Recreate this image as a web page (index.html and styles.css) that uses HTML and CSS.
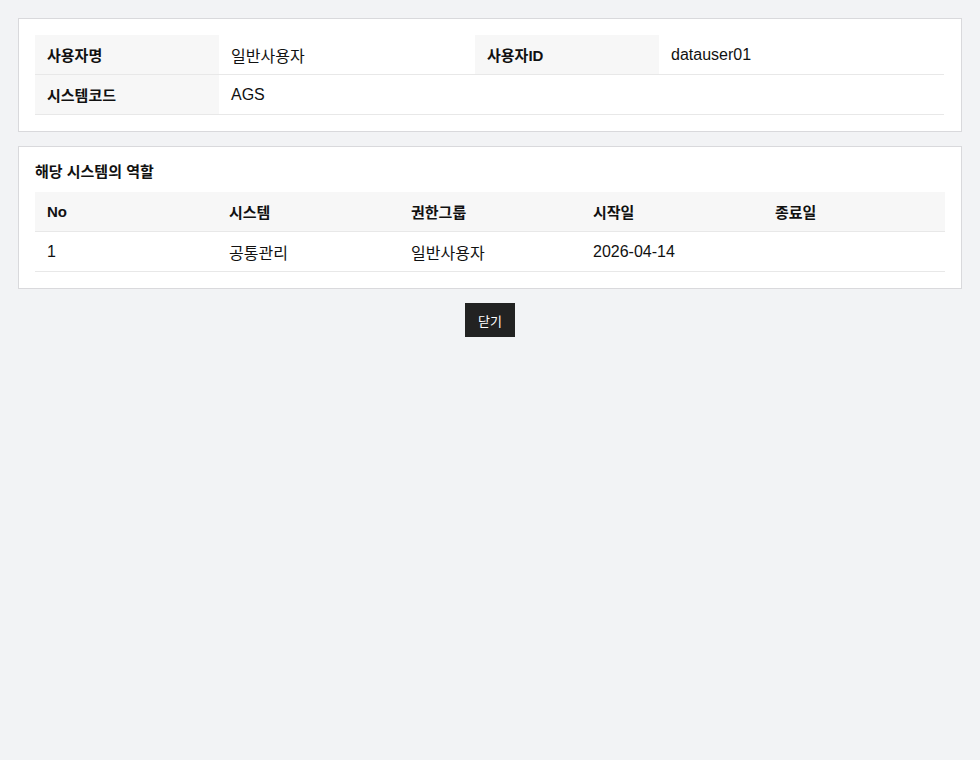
FILE: index.html
```html
<!DOCTYPE html>
<html lang="ko">
<head>
<meta charset="utf-8">
<link rel="stylesheet" href="styles.css">
</head>
<body>
<div class="page">
  <section class="card">
    <table class="info">
      <colgroup><col class="c-th"><col class="c-td1"><col class="c-th"><col></colgroup>
      <tr>
        <th>사용자명</th><td>일반사용자</td>
        <th>사용자ID</th><td>datauser01</td>
      </tr>
      <tr>
        <th>시스템코드</th><td>AGS</td>
        <td></td><td></td>
      </tr>
    </table>
  </section>
  <section class="card">
    <h2 class="title">해당 시스템의 역할</h2>
    <table class="list">
      <thead>
        <tr><th>No</th><th>시스템</th><th>권한그룹</th><th>시작일</th><th>종료일</th></tr>
      </thead>
      <tbody>
        <tr><td>1</td><td>공통관리</td><td>일반사용자</td><td>2026-04-14</td><td></td></tr>
      </tbody>
    </table>
  </section>
  <div class="actions"><button class="btn">닫기</button></div>
</div>
</body>
</html>
```
FILE: styles.css
```css
html, body { margin: 0; padding: 0; }
body {
  background: #f2f3f5;
  font-family: "Liberation Sans", "Noto Sans CJK KR", sans-serif;
  color: #111;
}
.page { padding: 18px; display: flex; flex-direction: column; gap: 14px; }
.card {
  background: #fff;
  border: 1px solid #d9d9dc;
  padding: 16px 17px 16px 16px;
}
table { border-collapse: collapse; width: 100%; table-layout: fixed; }
.c-th { width: 184px; }
.c-td1 { width: 256px; }
.info th, .info td {
  height: 39px;
  border-bottom: 1px solid #e8e8e8;
  text-align: left;
  padding: 0 12px;
  vertical-align: middle;
}
.info th { background: #f7f7f7; font-size: 15px; font-weight: 700; }
.info td { font-size: 16px; }
.title { margin: 0 0 12px; font-size: 15px; font-weight: 700; line-height: 17px; padding-top: 0; }
.list { margin-right: -1px; width: calc(100% + 1px); }
.list th, .list td {
  height: 39px;
  border-bottom: 1px solid #e8e8e8;
  text-align: left;
  padding: 0 12px;
  vertical-align: middle;
}
.list th { background: #f7f7f7; font-size: 15px; font-weight: 700; }
.list td { font-size: 16px; }
.actions { display: flex; justify-content: center; }
.btn {
  background: #222;
  color: #fff;
  border: 0;
  width: 50px;
  height: 34px;
  font-family: inherit;
  font-size: 13px;
  padding: 0;
  cursor: pointer;
}
```
